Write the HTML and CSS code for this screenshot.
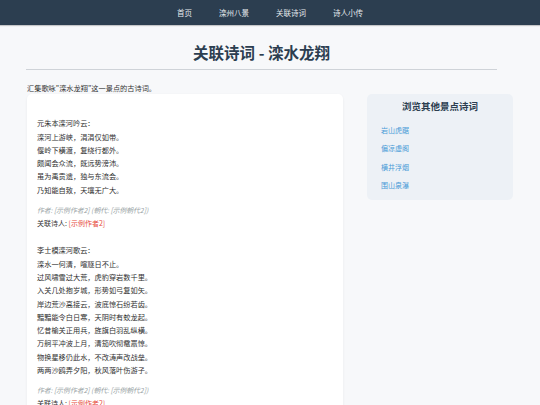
FILE: index.html
```html
<!DOCTYPE html>
<html lang="zh-CN">
<head>
    <meta charset="UTF-8">
    <meta name="viewport" content="width=device-width, initial-scale=1.0">
    <title>关联诗词 - 滦水龙翔</title>
    <link rel="stylesheet" href="styles.css">
</head>
<body>
    <nav class="top-nav">
        <a href="#">首页</a>
        <a href="#">滦州八景</a>
        <a href="#">关联诗词</a>
        <a href="#">诗人小传</a>
    </nav>

    <header class="page-header">
        <h1>关联诗词 - 滦水龙翔</h1>
    </header>

    <p class="intro">汇集歌咏"滦水龙翔"这一景点的古诗词。</p>

    <div class="layout">
        <main class="poem-list">
            <div class="poem-item">
                <div class="poem-text">元朱本滦河吟云：
滦河上游峡，涓涓仅如带。
偃岭下横渡，复绕行都外。
颇闻会众流，既远势滂沛。
虽为禹贡遗，独与东流会。
乃知能自致，天壤无广大。</div>
                <p class="poem-meta">作者: [示例作者2] (朝代: [示例朝代2])</p>
                <p class="poem-poet">关联诗人: <a href="#">[示例作者2]</a></p>
            </div>
            <div class="poem-item">
                <div class="poem-text">李士模滦河歌云：
滦水一何清，喧豗日不止。
过风啸雪过大荒，虎豹穿岩数千里。
入关几处抱岁城，形势如弓复如矢。
岸边荒沙高接云，波底惊石纷若齿。
黯黯能令白日寒，天阴时有蛟龙起。
忆昔榆关正用兵，旌旗白羽乱纵横。
万舸平冲波上月，清笳吹彻鼋鼍惊。
物换星移仍此水，不改涛声改战垒。
两两沙鸥弄夕阳，秋风落叶伤游子。</div>
                <p class="poem-meta">作者: [示例作者2] (朝代: [示例朝代2])</p>
                <p class="poem-poet">关联诗人: <a href="#">[示例作者2]</a></p>
            </div>
        </main>

        <aside class="side-panel">
            <h3>浏览其他景点诗词</h3>
            <ul>
                <li><a href="#">岩山虎踞</a></li>
                <li><a href="#">偏凉虚阁</a></li>
                <li><a href="#">横井浮烟</a></li>
                <li><a href="#">围山泉瀑</a></li>
            </ul>
        </aside>
    </div>
</body>
</html>
```

FILE: styles.css
```css
body {
    margin: 0;
    background-color: #f7f8fa;
    color: #333;
    font-family: "Noto Sans CJK SC", "Noto Sans", sans-serif;
    font-size: 7.2px;
}

.top-nav {
    height: 25px;
    background-color: #2c3e50;
    display: flex;
    justify-content: center;
    align-items: center;
    box-shadow: 0 1px 1px rgba(0, 0, 0, 0.2);
}
.top-nav a {
    color: #e6eaee;
    text-decoration: none;
    font-size: 7.5px;
    padding: 0 13.5px;
}

.page-header {
    margin: 0 43px 0 26px;
    padding-top: 17px;
    border-bottom: 1px solid #cfd3d8;
}
.page-header h1 {
    margin: 0 0 7px;
    text-align: center;
    color: #2c3e50;
    font-size: 15.5px;
    line-height: 20px;
    font-weight: bold;
}

.intro {
    margin: 13px 27px 1px;
    line-height: 10px;
    font-size: 7.2px;
    color: #333;
}

.layout {
    display: flex;
    align-items: flex-start;
    gap: 24px;
    margin: 0 27px;
}

.poem-list {
    width: 316px;
    box-sizing: border-box;
    background: #fff;
    border-radius: 5px;
    padding: 10px 10px 10px;
    box-shadow: 0 1px 3px rgba(0, 0, 0, 0.06);
}
.poem-item + .poem-item {
    margin-top: 3px;
}
.poem-text {
    white-space: pre-line;
    line-height: 13.3px;
    padding-top: 13.3px;
    color: #2f2f2f;
}
.poem-meta {
    margin: 7.5px 0 0;
    line-height: 10px;
    font-size: 6.8px;
    font-style: italic;
    color: #979fa4;
}
.poem-poet {
    margin: 3.5px 0 0;
    line-height: 10px;
    font-size: 7px;
    color: #333;
}
.poem-poet a {
    color: #e74c3c;
    text-decoration: none;
}

.side-panel {
    width: 146px;
    box-sizing: border-box;
    background-color: #edf1f6;
    border-radius: 5px;
    padding: 6px 14px 10px;
}
.side-panel h3 {
    margin: 0;
    text-align: center;
    font-size: 9.5px;
    line-height: 12px;
    color: #2c3e50;
}
.side-panel ul {
    list-style: none;
    margin: 13px 0 0;
    padding: 0;
}
.side-panel li {
    line-height: 10px;
    margin-bottom: 8.3px;
}
.side-panel li:last-child {
    margin-bottom: 0;
}
.side-panel a {
    color: #4a9bd6;
    text-decoration: none;
    font-size: 7px;
}
```
